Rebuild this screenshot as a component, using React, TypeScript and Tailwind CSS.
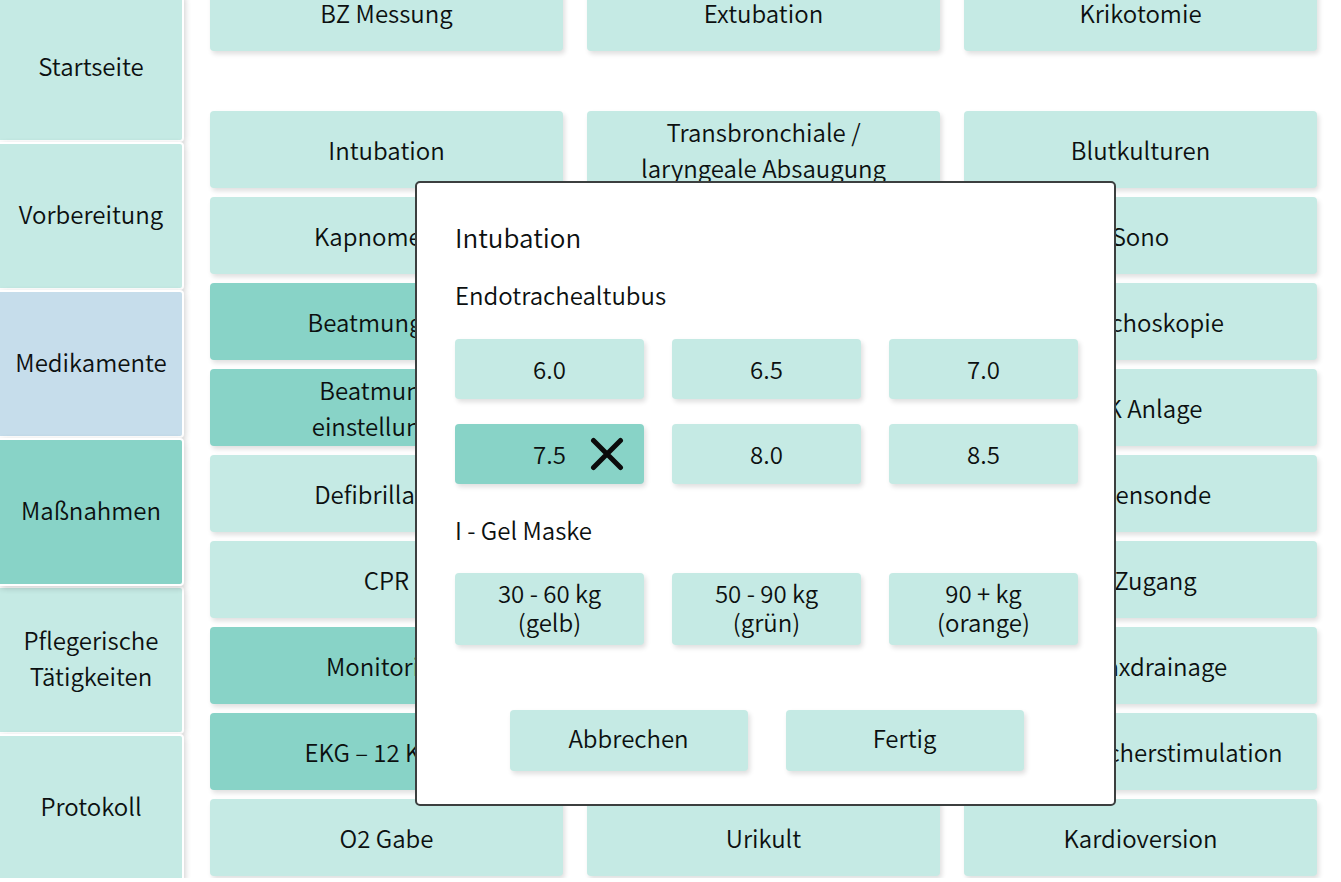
import { clsx } from "clsx";

const navItems = [
  { label: "Startseite", tone: "bg-[#c5eae4]" },
  { label: "Vorbereitung", tone: "bg-[#c5eae4]" },
  { label: "Medikamente", tone: "bg-[#c6ddeb] relative z-10" },
  { label: "Maßnahmen", tone: "bg-[#88d3c7] relative z-10" },
  { label: "Pflegerische Tätigkeiten", tone: "bg-[#c5eae4]" },
  { label: "Protokoll", tone: "bg-[#c5eae4]" },
];

type Action = { label: string; active?: boolean };

const airwayActions: Action[] = [
  { label: "BZ Messung" },
  { label: "Extubation" },
  { label: "Krikotomie" },
];

const actions: (Action | null)[] = [
  { label: "Intubation" },
  { label: "Transbronchiale /\nlaryngeale Absaugung" },
  { label: "Blutkulturen" },
  { label: "Kapnometrie" },
  null,
  { label: "Sono" },
  { label: "Beatmung NIV", active: true },
  null,
  { label: "Bronchoskopie" },
  { label: "Beatmungs-\neinstellungen", active: true },
  null,
  { label: "ZVK Anlage" },
  { label: "Defibrillation" },
  null,
  { label: "Magensonde" },
  { label: "CPR" },
  null,
  { label: "IO Zugang" },
  { label: "Monitoring", active: true },
  null,
  { label: "Thoraxdrainage" },
  { label: "EKG – 12 Kanal", active: true },
  null,
  { label: "Schrittmacherstimulation" },
  { label: "O2 Gabe" },
  { label: "Urikult" },
  { label: "Kardioversion" },
];

const tubeSizes = ["6.0", "6.5", "7.0", "7.5", "8.0", "8.5"];
const maskSizes = ["30 - 60 kg\n(gelb)", "50 - 90 kg\n(grün)", "90 + kg\n(orange)"];

const tile =
  "flex items-center justify-center rounded text-center whitespace-pre-line shadow-[2px_3px_5px_rgba(0,0,0,0.13)]";

function ActionTile({ label, active }: Action) {
  return (
    <button
      type="button"
      className={clsx(tile, "h-[77px] leading-9", active ? "bg-[#88d3c7]" : "bg-[#c5eae4]")}
    >
      {label}
    </button>
  );
}

function Cross() {
  return (
    <svg viewBox="0 0 34 34" className="size-[34px]" aria-hidden="true">
      <path d="M3.5 3.5L30.5 30.5M30.5 3.5L3.5 30.5" stroke="#0b0b0b" strokeWidth="5" strokeLinecap="round" />
    </svg>
  );
}

function IntubationDialog() {
  return (
    <section
      role="dialog"
      aria-labelledby="dialog-title"
      className="w-[701px] rounded-[5px] border-2 border-[#3c3f3f] bg-white pt-9 pr-9 pb-[33px] pl-[38px]"
    >
      <h2 id="dialog-title" className="text-[26px] leading-9">
        Intubation
      </h2>
      <h3 className="mt-[22px] leading-9">Endotrachealtubus</h3>
      <div className="mt-[26px] grid grid-cols-3 gap-x-7 gap-y-[25px]">
        {tubeSizes.map((size) => {
          const selected = size === "7.5";
          return (
            <button
              key={size}
              type="button"
              aria-pressed={selected}
              className={clsx(tile, "relative h-[60px] leading-9", selected ? "bg-[#88d3c7]" : "bg-[#c5eae4]")}
            >
              {size}
              {selected && (
                <span className="absolute right-5">
                  <Cross />
                </span>
              )}
            </button>
          );
        })}
      </div>
      <h3 className="mt-7 leading-9">I - Gel Maske</h3>
      <div className="mt-[25px] grid grid-cols-3 gap-x-7">
        {maskSizes.map((size) => (
          <button key={size} type="button" className={clsx(tile, "h-[72px] bg-[#c5eae4] pb-1 leading-[29px]")}>
            {size}
          </button>
        ))}
      </div>
      <div className="mt-[65px] flex justify-center gap-[38px]">
        <button type="button" className={clsx(tile, "h-[61px] w-[238px] bg-[#c5eae4] pb-1.5 leading-9")}>
          Abbrechen
        </button>
        <button type="button" className={clsx(tile, "h-[61px] w-[238px] bg-[#c5eae4] pb-1.5 leading-9")}>
          Fertig
        </button>
      </div>
    </section>
  );
}

export default function App() {
  return (
    <div className="flex h-screen flex-col bg-white pb-1 font-['Noto_Sans_CJK_SC',sans-serif] text-[24px] font-[350] text-[#0c1010]">
      <div className="relative flex min-h-0 flex-1 overflow-hidden">
        <nav className="-mt-1.5 w-[184px] shrink-0">
          {navItems.map(({ label, tone }) => (
            <a
              key={label}
              href="#"
              className={clsx(
                "flex h-[148px] items-center justify-center rounded-r border-2 border-l-0 border-white px-2 pb-1 text-center leading-9 shadow-[1px_2px_6px_rgba(0,0,0,0.2)]",
                tone,
              )}
            >
              {label}
            </a>
          ))}
        </nav>
        <main className="min-w-0 flex-1 pr-6 pl-[26px]">
          <div className="-mt-[26px] grid grid-cols-3 gap-x-6">
            {airwayActions.map((action) => (
              <ActionTile key={action.label} {...action} />
            ))}
          </div>
          <div className="mt-[60px] grid grid-cols-3 gap-x-6 gap-y-[9px]">
            {actions.map((action, i) => (action ? <ActionTile key={action.label} {...action} /> : <div key={i} />))}
          </div>
        </main>
        <div className="absolute inset-y-0 right-0 left-[190px] z-20 flex items-start justify-center pt-[181px]">
          <IntubationDialog />
        </div>
      </div>
    </div>
  );
}
